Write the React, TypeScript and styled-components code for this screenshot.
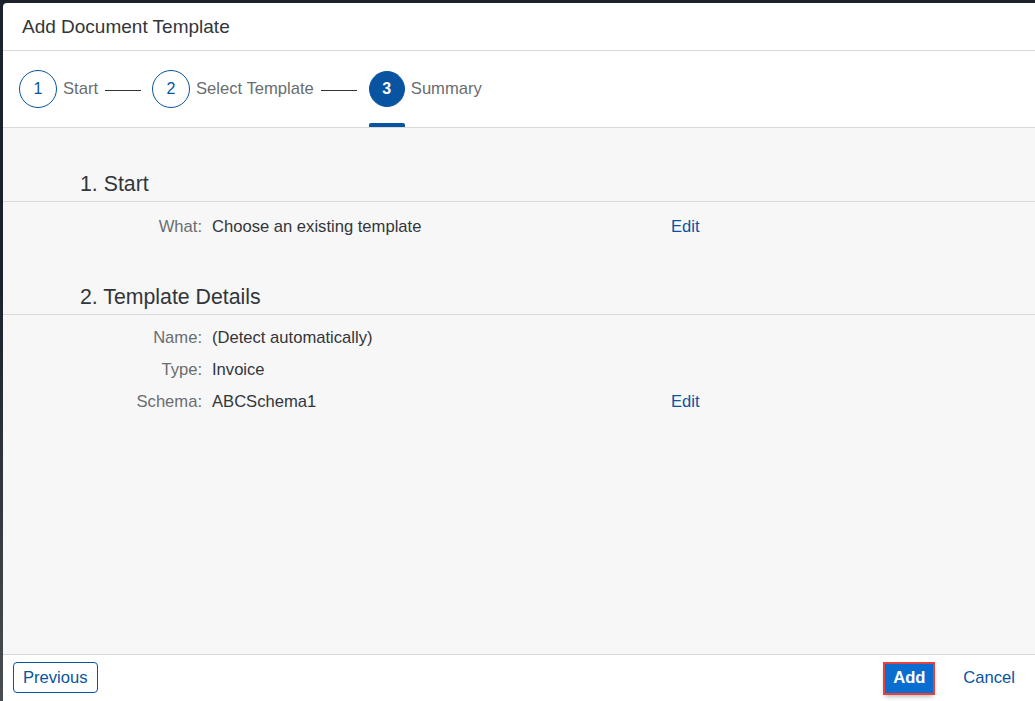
import React from "react";
import styled, { createGlobalStyle } from "styled-components";

const Global = createGlobalStyle`
  html, body { margin: 0; padding: 0; height: 100%; }
  body {
    background: #1b222b;
    font-family: "Liberation Sans", Arial, sans-serif;
    overflow: hidden;
  }
  #root { height: 100%; }
`;

const Page = styled.div`
  height: 701px;
  width: 1035px;
  padding: 3px 0 0 3px;
  box-sizing: border-box;
  background: linear-gradient(#1b222b, #1b222b 40%, #4a4d50);
`;

const Dialog = styled.div`
  height: 698px;
  width: 1032px;
  background: #fff;
  border-top-left-radius: 4px;
  display: flex;
  flex-direction: column;
  overflow: hidden;
`;

const Header = styled.header`
  height: 47px;
  flex: none;
  display: flex;
  align-items: center;
  padding-left: 19px;
  border-bottom: 1px solid #d9d9d9;
`;

const Title = styled.h1`
  margin: 0;
  font-size: 19px;
  font-weight: 400;
  color: #32363a;
`;

const StepBar = styled.nav`
  height: 76px;
  flex: none;
  display: flex;
  align-items: stretch;
  padding-left: 16px;
  border-bottom: 1px solid #d9d9d9;
  background: #fff;
`;

const Step = styled.div<{ $active?: boolean }>`
  position: relative;
  display: flex;
  align-items: center;
  gap: 6px;
  &::after {
    content: "";
    display: ${(p) => (p.$active ? "block" : "none")};
    position: absolute;
    left: 0;
    bottom: 0;
    width: 36px;
    height: 4px;
    border-radius: 2px 2px 0 0;
    background: #0854a0;
  }
`;

const Circle = styled.span<{ $active?: boolean }>`
  box-sizing: border-box;
  width: ${(p) => (p.$active ? "36px" : "38px")};
  height: ${(p) => (p.$active ? "36px" : "38px")};
  border-radius: 50%;
  border: 1px solid #0854a0;
  background: ${(p) => (p.$active ? "#0854a0" : "#fff")};
  color: ${(p) => (p.$active ? "#fff" : "#0854a0")};
  display: flex;
  align-items: center;
  justify-content: center;
  font-size: 16px;
  font-weight: ${(p) => (p.$active ? 700 : 400)};
`;

const StepLabel = styled.span`
  font-size: 16.6px;
  color: #6a6d70;
`;

const Connector = styled.span<{ $after: number }>`
  width: 36px;
  height: 1px;
  background: #32363a;
  align-self: center;
  margin: 2px ${(p) => p.$after}px 0 7px;
`;

const Content = styled.main`
  flex: 1;
  background: #f7f7f7;
  padding-top: 44px;
`;

const Section = styled.section`
  margin-bottom: 42px;
`;

const SectionTitle = styled.h2`
  margin: 0;
  padding: 0 0 5px 77px;
  font-size: 21.3px;
  line-height: 24px;
  font-weight: 400;
  color: #32363a;
  border-bottom: 1px solid #d9d9d9;
`;

const Rows = styled.div<{ $top: number }>`
  padding-top: ${(p) => p.$top}px;
  display: grid;
  grid-template-columns: 199px 469px auto;
`;

const Label = styled.span`
  text-align: right;
  color: #6a6d70;
  font-size: 16.6px;
  line-height: 32px;
`;

const Value = styled.span`
  padding-left: 10px;
  color: #32363a;
  font-size: 16.6px;
  line-height: 32px;
`;

const EditLink = styled.a`
  color: #0854a0;
  font-size: 16.6px;
  line-height: 32px;
  text-decoration: none;
  cursor: pointer;
`;

const Footer = styled.footer`
  height: 46px;
  flex: none;
  border-top: 1px solid #d9d9d9;
  display: flex;
  align-items: center;
  padding: 0 12px 0 10px;
  background: #fff;
`;

const GhostButton = styled.button`
  height: 31px;
  padding: 0 9px;
  border: 1px solid #0854a0;
  border-radius: 4px;
  background: #fff;
  color: #0854a0;
  font-family: inherit;
  font-size: 16.6px;
  margin-top: -1px;
`;

const Spacer = styled.div`
  flex: 1;
`;

const PrimaryButton = styled.button`
  height: 29px;
  width: 48px;
  padding: 0;
  border: none;
  background: #0a6ed1;
  color: #fff;
  font-family: inherit;
  font-size: 16.6px;
  font-weight: 700;
  outline: 2px solid #e8413b;
  box-shadow: 0 3px 5px rgba(0, 0, 0, 0.35);
  margin-right: 22px;
`;

const TextButton = styled.button`
  height: 31px;
  padding: 0 8px;
  border: none;
  background: transparent;
  color: #0854a0;
  font-family: inherit;
  font-size: 16.6px;
`;

const steps = [
  { n: 1, label: "Start", after: 11 },
  { n: 2, label: "Select Template", after: 12 },
  { n: 3, label: "Summary", active: true },
];

export default function App() {
  return (
    <>
      <Global />
      <Page>
        <Dialog>
          <Header>
            <Title>Add Document Template</Title>
          </Header>
          <StepBar>
            {steps.map((s) => (
              <React.Fragment key={s.n}>
                <Step $active={s.active}>
                  <Circle $active={s.active}>{s.n}</Circle>
                  <StepLabel>{s.label}</StepLabel>
                </Step>
                {s.after !== undefined && <Connector $after={s.after} />}
              </React.Fragment>
            ))}
          </StepBar>
          <Content>
            <Section>
              <SectionTitle>1. Start</SectionTitle>
              <Rows $top={9}>
                <Label>What:</Label>
                <Value>Choose an existing template</Value>
                <EditLink>Edit</EditLink>
              </Rows>
            </Section>
            <Section>
              <SectionTitle>2. Template Details</SectionTitle>
              <Rows $top={7}>
                <Label>Name:</Label>
                <Value>(Detect automatically)</Value>
                <span />
                <Label>Type:</Label>
                <Value>Invoice</Value>
                <span />
                <Label>Schema:</Label>
                <Value>ABCSchema1</Value>
                <EditLink>Edit</EditLink>
              </Rows>
            </Section>
          </Content>
          <Footer>
            <GhostButton>Previous</GhostButton>
            <Spacer />
            <PrimaryButton>Add</PrimaryButton>
            <TextButton>Cancel</TextButton>
          </Footer>
        </Dialog>
      </Page>
    </>
  );
}
